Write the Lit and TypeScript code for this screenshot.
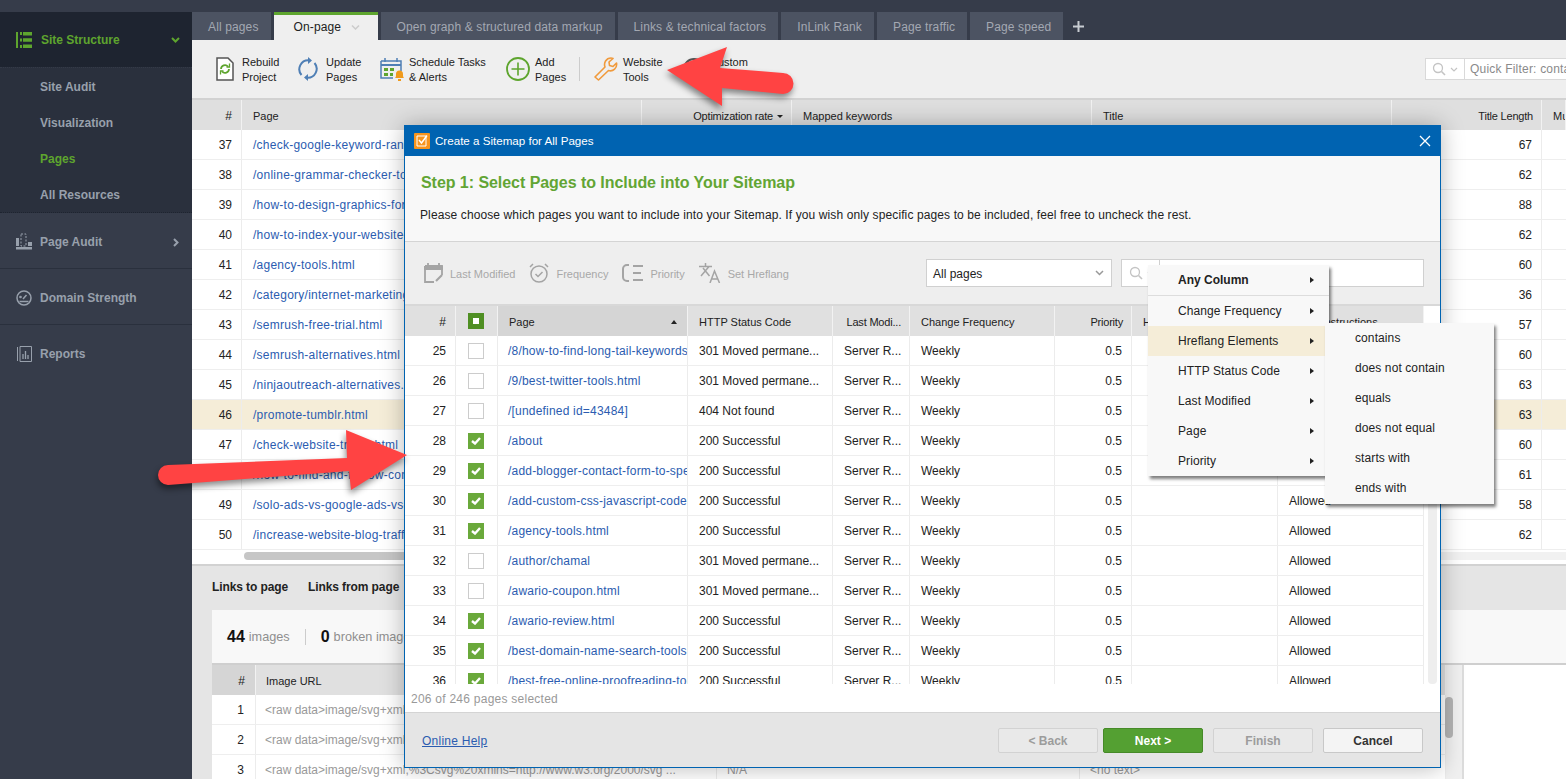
import { LitElement, html, css, svg } from 'lit';
import { customElement } from 'lit/decorators.js';

const mainRows = [
  [37, '/check-google-keyword-rank-checker.html', 67],
  [38, '/online-grammar-checker-tools.html', 62],
  [39, '/how-to-design-graphics-for-social.html', 88],
  [40, '/how-to-index-your-website-fast.html', 62],
  [41, '/agency-tools.html', 60],
  [42, '/category/internet-marketing', 36],
  [43, '/semrush-free-trial.html', 57],
  [44, '/semrush-alternatives.html', 60],
  [45, '/ninjaoutreach-alternatives.html', 63],
  [46, '/promote-tumblr.html', 63],
  [47, '/check-website-traffic.html', 60],
  [48, '/how-to-find-and-fix-low-content.html', 61],
  [49, '/solo-ads-vs-google-ads-vs-facebook.html', 58],
  [50, '/increase-website-blog-traffic.html', 62],
] as const;

const S301 = '301 Moved permane...';
const S200 = '200 Successful';
const dialogRows = [
  [25, false, '/8/how-to-find-long-tail-keywords.html', S301],
  [26, false, '/9/best-twitter-tools.html', S301],
  [27, false, '/[undefined id=43484]', '404 Not found'],
  [28, true, '/about', S200],
  [29, true, '/add-blogger-contact-form-to-spe', S200],
  [30, true, '/add-custom-css-javascript-code', S200],
  [31, true, '/agency-tools.html', S200],
  [32, false, '/author/chamal', S301],
  [33, false, '/awario-coupon.html', S301],
  [34, true, '/awario-review.html', S200],
  [35, true, '/best-domain-name-search-tools', S200],
  [36, true, '/best-free-online-proofreading-tools', S200],
] as const;

const tabs = ['Open graph & structured data markup', 'Links & technical factors', 'InLink Rank', 'Page traffic', 'Page speed'];
const filterItems = ['Change Frequency', 'Hreflang Elements', 'HTTP Status Code', 'Last Modified', 'Page', 'Priority'];
const subItems = ['contains', 'does not contain', 'equals', 'does not equal', 'starts with', 'ends with'];

const searchIcon = html`<svg class="sicon" width="26" height="14" viewBox="0 0 26 14" fill="none" stroke="#c4c4c4">
  <circle cx="6" cy="6" r="4.5" stroke-width="1.3"/><path d="M9.5 9.5l3.5 3.5" stroke-width="1.6"/><path d="M19 6l3 3 3-3" stroke-width="1.2"/>
</svg>`;

@customElement('app-root')
export class AppRoot extends LitElement {
  static styles = css`
    :host { display: block; font: 12px "Liberation Sans", Arial, sans-serif; color: #222; }
    .page { position: relative; display: grid; grid-template-columns: 192px 1fr; width: 1566px; height: 779px; overflow: hidden; background: #363c4a; }
    svg { display: block; flex: none; }

    .side { padding-top: 12px; font-weight: bold; color: #98a0ac; }
    .side-head { display: flex; align-items: center; height: 55px; box-sizing: border-box; padding: 1px 12px 0 16px; gap: 9px; background: #1e2430; color: #5ea52e; }
    .side-head span, .side-item span { flex: 1; }
    .side-sub { display: flex; flex-direction: column; height: 146px; background: #2a303d; border-top: 1px dotted #343a47; border-bottom: 1px dotted #1e2430; box-sizing: border-box; padding-top: 1px; }
    .side-sub div { height: 36px; line-height: 36px; padding-left: 40px; }
    .side-sub .on { color: #5ea52e; }
    .side-item { display: flex; align-items: center; height: 56px; padding: 2px 13px 0 16px; gap: 8px; border-bottom: 1px solid #2a303d; box-sizing: border-box; }
    .side-item:last-child { border: 0; }
    .side-item .more { margin-top: 2px; }

    .main { display: flex; flex-direction: column; min-width: 0; padding-top: 12px; }
    .tabs { display: flex; gap: 3px; height: 28px; flex: none; }
    .tab { padding: 0 12px 0 16px; line-height: 30px; background: #4c5362; color: #a3a8b2; white-space: nowrap; letter-spacing: .13px; }
    .tab.active { display: flex; gap: 10px; align-items: center; box-sizing: border-box; width: 104px; padding: 0 0 0 20px; background: #efefef; color: #222; border-top: 3px solid #5ea52e; line-height: 25px; }
    .tab-add { margin-left: 7px; align-self: center; }

    .toolbar { display: flex; align-items: center; height: 58px; flex: none; background: #efefef; border-bottom: 2px solid #d2d2d2; padding-left: 24px; }
    .tool { display: flex; align-items: center; font-size: 11px; line-height: 15px; color: #222; white-space: nowrap; }
    .tool span { padding-top: 2px; }
    .tool svg { margin-right: 8px; }
    .tool svg.tight { margin-right: 5px; }
    .tool svg.tighter { margin-right: 4px; }
    .tool.w82 { width: 82px; }
    .tool.w88 { width: 88px; }
    .tool.w126 { width: 126px; }
    .tool .narrow { width: 30px; }
    .tool-sep { width: 1px; height: 24px; background: #ccc; margin: 0 14px; }
    .quick { display: flex; align-items: center; height: 22px; margin-left: auto; width: 141px; flex: none; box-sizing: border-box; background: #fff; border: 1px solid #d9d9d9; border-right: 0; color: #8a8a8a; white-space: nowrap; overflow: hidden; letter-spacing: .2px; }
    .quick .sicon { margin: 0 6px 0 6px; }
    .quick b { font-weight: normal; border-left: 1px solid #d9d9d9; line-height: 20px; padding-left: 5px; }

    .row { display: grid; height: 30px; align-items: center; }
    .main-grid { grid-template-columns: 50px 400px 150px 300px 300px 150px 24px; }
    .cell { height: 100%; line-height: 30px; box-sizing: border-box; padding: 0 10px 0 11px; overflow: hidden; white-space: nowrap; border-right: 1px solid #ececec; }
    .num { text-align: right; padding-right: 9px; }
    .link { color: #2b5cb0; }
    .main-table .link { letter-spacing: .25px; }
    .head { background: #dfdfdf; font-size: 11px; color: #222; }
    .head .cell { border-right: 1px solid #f2f2f2; line-height: 33px; }
    .head .num { letter-spacing: -.2px; padding-right: 8px; }
    .head .big { font-size: 12px; letter-spacing: 0; padding-right: 9px; }
    .main-table { flex: none; background: #fff; }
    .main-table .body .row { border-bottom: 1px solid #eee; box-sizing: border-box; }
    .main-table .body .cell:last-child { border: 0; }
    .hl { background: #f5edd8; }
    .caret { display: inline-block; margin-left: 4px; vertical-align: 2px; border: 3px solid transparent; border-top: 3px solid #222; border-bottom: 0; }
    .hscroll { display: flex; flex: none; height: 16px; background: #fff; border-bottom: 2px solid #d2d2d2; box-sizing: border-box; padding: 2px 0 0 52px; }
    .hscroll .thumb { width: 1000px; height: 8px; border-radius: 4px; background: #c6c6c6; }
    .hscroll .track { flex: 1; height: 8px; background: #f1f1f1; }

    .bottom { flex: 1; min-height: 0; background: #e5e5e5; padding-left: 20px; }
    .bottom-tabs { display: flex; gap: 20px; height: 44px; padding-top: 14px; box-sizing: border-box; font-weight: bold; color: #222; letter-spacing: -.1px; }
    .stats { display: flex; align-items: center; height: 55px; box-sizing: border-box; padding-left: 15px; background: #f8f8f8; border-bottom: 2px solid #cfcfcf; color: #8f8f8f; font-size: 12.7px; }
    .stats b { color: #111; font-size: 16px; margin-right: 4px; }
    .stats i { width: 1px; height: 16px; background: #ccc; margin: 0 15px; }
    .b-wrap { display: grid; grid-template-columns: 1234px 16px 2px 1fr; }
    .b-table { background: #fff; }
    .bottom-grid { grid-template-columns: 44px 461px 363px 366px; }
    .b-table .head { background: #e0e0e0; }
    .b-table .head .cell { padding-left: 10px; }
    .b-table .head .cell:first-child { background: #d5d5d5; text-align: right; font-size: 12px; padding: 0 10px 0 0; }
    .b-table .body .cell { color: #999; padding-left: 10px; }
    .b-table .body .cell.url { padding-left: 10px; margin-left: -1px; }
    .b-table .body .cell.n { color: #222; text-align: right; padding: 0 11px 0 0; }
    .b-table .body .row { border-bottom: 1px solid #eee; box-sizing: border-box; }
    .b-scroll { background: #f0f0f0; height: 114px; padding: 32px 0 0; box-sizing: border-box; }
    .b-scroll div { width: 8px; height: 41px; margin-left: -1px; border-radius: 4px; background: #b4b4b4; }
    .b-line { background: #dcdcdc; }
    .b-right { background: #fff; }

    .dialog { position: absolute; left: 404px; top: 125px; width: 1037px; height: 643px; box-sizing: border-box; display: flex; flex-direction: column; background: #fff; border: 1px solid #0063b1; border-top: 0; box-shadow: 0 0 22px rgba(0,0,0,.28); }
    .d-title { display: flex; align-items: center; gap: 5px; height: 31px; flex: none; padding: 0 9px; background: #0063b1; color: #fff; font-size: 11.6px; }
    .d-title span { flex: 1; }
    .d-head { height: 86px; flex: none; background: #f8f8f8; border-bottom: 1px solid #d4d4d4; padding: 17px 15px 0; box-sizing: border-box; }
    .d-head h2 { margin: 0 0 15px 1px; font-size: 16px; line-height: 20px; color: #62a534; letter-spacing: -.05px; }
    .d-head p { margin: 0; line-height: 15px; letter-spacing: .11px; }
    .d-tools { display: flex; align-items: center; height: 64px; flex: none; padding: 0 16px 0 19px; box-sizing: border-box; background: #eee; border-bottom: 2px solid #d8d8d8; color: #a8a8a8; font-size: 11px; }
    .d-tool { display: flex; align-items: center; gap: 7px; margin-right: 14px; padding-top: 2px; white-space: nowrap; }
    .d-tool svg { margin-top: -2px; }
    .select { display: flex; align-items: center; justify-content: space-between; box-sizing: border-box; width: 186px; height: 28px; margin-left: auto; padding: 2px 7px 0 6px; background: #fff; border: 1px solid #d0d0d0; color: #222; font-size: 12px; }
    .select svg { margin-top: -2px; }
    .filter { display: flex; align-items: center; box-sizing: border-box; width: 303px; height: 28px; margin-left: 9px; background: #fff; border: 1px solid #d0d0d0; }
    .filter .sicon { margin: 0 2px 0 7px; }
    .filter i { height: 100%; border-left: 1px solid #d0d0d0; margin-left: 2px; }
    .d-grid { grid-template-columns: 51px 42px 190px 145px 77px 145px 77px 146px 146px; }
    .d-table { position: relative; flex: 1; min-height: 0; overflow: hidden; }
    .d-table .head { background: #e0e0e0; width: 1019px; }
    .d-table .head .s { background: #d5d5d5; }
    .d-table .body .row { width: 1019px; border-bottom: 1px solid #eee; box-sizing: border-box; }
    .d-table .cell.pg { padding: 0 0 0 10px; letter-spacing: .2px; }
    .d-table .cell.c { display: flex; align-items: center; justify-content: center; padding: 0 2px 0 0; }
    .chk { box-sizing: border-box; width: 16px; height: 16px; border: 1px solid #ccc; background: #fff; }
    .chk.on { border: 0; background: #6aa93b; display: flex; align-items: center; justify-content: center; }
    .chk.part { border: 0; background: #4f8f23; display: flex; align-items: center; justify-content: center; }
    .chk.part::after { content: ""; width: 6px; height: 6px; background: #fff; }
    .sort { display: flex; justify-content: space-between; align-items: center; padding-top: 2px; }
    .sort::after { content: ""; border: 3.5px solid transparent; border-bottom: 4px solid #222; border-top: 0; }
    .vscroll { position: absolute; left: 1023px; top: 30px; bottom: 0; width: 9px; background: #eee; border-radius: 4px; }
    .d-status { height: 29px; flex: none; box-sizing: border-box; line-height: 30px; padding-left: 6px; color: #999; border-bottom: 1px solid #d4d4d4; letter-spacing: .25px; }
    .d-foot { height: 54px; flex: none; display: flex; align-items: center; gap: 5px; padding: 0 17px 0 17px; background: #e5e5e5; }
    .help { margin-right: auto; padding-top: 2px; color: #2b5cb0; text-decoration: underline; letter-spacing: .25px; }
    .btn { width: 100px; height: 25px; box-sizing: border-box; line-height: 25px; text-align: center; border: 1px solid #d2d2d2; border-radius: 2px; background: #e9e9e9; color: #9c9c9c; font-weight: bold; }
    .btn.next { background: #54a032; border-color: #468a28; color: #fff; margin-right: 5px; }
    .btn.cancel { background: #f4f4f4; border-color: #c8c8c8; color: #333; margin-left: 5px; }

    .menu { position: absolute; box-sizing: border-box; background: #f8f8f8; box-shadow: 2px 3px 3px rgba(0,0,0,.5); color: #222; letter-spacing: .1px; }
    .menu.first { left: 1148px; top: 265px; width: 181px; height: 211px; }
    .menu.second { left: 1325px; top: 323px; width: 169px; height: 181px; padding-left: 30px; }
    .mi { display: flex; align-items: center; height: 30px; padding-left: 30px; position: relative; white-space: nowrap; }
    .mi::after { content: ""; position: absolute; right: 15px; top: 12px; border: 3px solid transparent; border-left: 4px solid #222; border-right: 0; }
    .mi.any { font-weight: bold; border-bottom: 1px solid #ddd; letter-spacing: 0; }
    .mi.hover { background: #f5edd8; width: 177px; box-sizing: border-box; }
    .mi.hover::after { right: 11px; }
    .menu.second div { height: 30px; line-height: 30px; }

    .arrow { position: absolute; overflow: visible; filter: drop-shadow(-1px 4px 3px rgba(0,0,0,.45)); }
    .arrow.top { left: 666px; top: 46px; }
    .arrow.left { left: 158px; top: 430px; }
  `;

  private sidebar() {
    return html`<aside class="side">
      <div class="side-head">
        <svg width="16" height="16" viewBox="0 0 16 16" fill="#5ea52e"><path d="M0 0h2v16H0zM4 0h2v3H4zM4 6.500h2v3H4zM4 13h2v3H4zM7 0h9v3.500H7zM7 6.200h9v3.500H7zM7 12.500h9V16H7z"/></svg>
        <span>Site Structure</span>
        <svg width="9" height="6" viewBox="0 0 9 6" fill="none" stroke="#5ea52e" stroke-width="2"><path d="M1 1l3.500 3.500L8 1"/></svg>
      </div>
      <div class="side-sub">
        <div>Site Audit</div><div>Visualization</div><div class="on">Pages</div><div>All Resources</div>
      </div>
      <div class="side-item">
        <svg width="16" height="17" viewBox="0 0 16 17" fill="#98a0ac"><path d="M0 14h16v2.500H0zM0 5h3v8H0zM12 9h4v4h-4z"/><path d="M5 1h5v12H5z" fill="none" stroke="#98a0ac" stroke-dasharray="2 1.500"/></svg>
        <span>Page Audit</span>
        <svg class="more" width="6" height="9" viewBox="0 0 6 9" fill="none" stroke="#98a0ac" stroke-width="2"><path d="M1 1l3.500 3.500L1 8"/></svg>
      </div>
      <div class="side-item">
        <svg width="16" height="16" viewBox="0 0 16 16" fill="none" stroke="#98a0ac" stroke-width="1.500"><circle cx="8" cy="8" r="7"/><path d="M3.500 11.500h9M7 9l3.500-4" /><circle cx="4.500" cy="7" r=".6"/></svg>
        <span>Domain Strength</span>
      </div>
      <div class="side-item">
        <svg width="16" height="16" viewBox="0 0 16 16" fill="none" stroke="#98a0ac"><path d="M1.500 1v14M4 .5h11.500v15H4z"/><path d="M7 13V8M9.500 13V5M12 13V9" stroke-width="1.300"/></svg>
        <span>Reports</span>
      </div>
    </aside>`;
  }

  private toolbar() {
    return html`<div class="toolbar">
      <div class="tool w82">
        <svg width="18" height="24" viewBox="0 0 18 24" fill="none"><path d="M1 1h11l5 5v17H1z" fill="#fff" stroke="#555" stroke-width="1.500"/><path d="M5 12a4 4 0 0 1 7-2.500M13 12a4 4 0 0 1-7 2.500" stroke="#5ea52e" stroke-width="1.800"/><path d="M10.500 10h3V6.500M7.500 14h-3v3.500" stroke="#5ea52e" stroke-width="1.300"/></svg>
        <span>Rebuild<br />Project</span>
      </div>
      <div class="tool w82">
        <svg width="20" height="24" viewBox="0 0 20 24" fill="none" stroke="#4f7fb5" stroke-width="2"><path d="M3.500 18A9 9 0 0 1 11 3.200M16.500 6a9 9 0 0 1-7.500 14.800"/><path d="M10 0l4 3.500-4 3.500zM10 17l-4 3.500 4 3.500z" fill="#4f7fb5" stroke="none"/></svg>
        <span>Update<br />Pages</span>
      </div>
      <div class="tool w126">
        <svg class="tight" width="24" height="24" viewBox="0 0 24 24" fill="none"><path d="M1 4h20v10M1 4v17h12" stroke="#4f7fb5" stroke-width="1.500"/><path d="M1 8h20" stroke="#4f7fb5" stroke-width="2"/><path d="M5 1v4M17 1v4" stroke="#4f7fb5" stroke-width="1.500"/><path d="M4 11h4v3H4zM10 11h4v3h-4zM4 16h4v3H4zM10 16h3v3h-3z" fill="#5ea52e"/><path d="M15 21c1-1 1-2 1-4a3.500 3.500 0 0 1 7 0c0 2 0 3 1 4z M18 22h3v2h-3z" fill="#f09a1c"/></svg>
        <span>Schedule Tasks<br />&amp; Alerts</span>
      </div>
      <div class="tool">
        <svg class="tight" width="24" height="24" viewBox="0 0 24 24" fill="none" stroke="#5ea52e" stroke-width="1.800"><circle cx="12" cy="12" r="11"/><path d="M12 5.500v13M5.500 12h13" stroke-width="1.600"/></svg>
        <span class="narrow">Add<br />Pages</span>
      </div>
      <i class="tool-sep"></i>
      <div class="tool w88">
        <svg class="tight" width="24" height="24" viewBox="0 0 24 24" fill="none" stroke="#f09a3c" stroke-width="1.600"><path d="M1 20l10-10c-1.500-4 1-9 6-9 1 0 1.500 .2 2 .5l-4 3.500 .5 3.500 3.500 1 3.500-3.500c1 5-3.500 9-8 7.500L4.500 23z" stroke-linejoin="round"/></svg>
        <span>Website<br />Tools</span>
      </div>
      <div class="tool">
        <svg class="tighter" width="24" height="24" viewBox="0 0 24 24" fill="none" stroke="#555" stroke-width="2"><circle cx="12" cy="12" r="10"/></svg>
        <span>Custom<br />&nbsp;</span>
      </div>
      <div class="quick">${searchIcon}<b>Quick Filter: contains</b></div>
    </div>`;
  }

  private mainTable() {
    return html`<div class="main-table">
      <div class="row main-grid head">
        <div class="cell num big">#</div><div class="cell">Page</div>
        <div class="cell num">Optimization rate<i class="caret"></i></div>
        <div class="cell">Mapped keywords</div><div class="cell">Title</div>
        <div class="cell num">Title Length</div><div class="cell">Mu</div>
      </div>
      <div class="body">
        ${mainRows.map(([n, p, len]) => html`<div class="row main-grid ${n === 46 ? 'hl' : ''}">
          <div class="cell num">${n}</div><div class="cell link">${p}</div>
          <div class="cell"></div><div class="cell"></div><div class="cell"></div>
          <div class="cell num">${len}</div><div class="cell"></div>
        </div>`)}
      </div>
    </div>`;
  }

  private bottomPanel() {
    const url = '<raw data>image/svg+xml,%3Csvg%20xmlns=http://www.w3.org/2000/svg ...';
    return html`<div class="bottom">
      <div class="bottom-tabs"><span>Links to page</span><span>Links from page</span></div>
      <div class="stats"><b>44</b> images<i></i><b>0</b> broken images</div>
      <div class="b-wrap">
        <div class="b-table">
          <div class="row bottom-grid head">
            <div class="cell">#</div><div class="cell">Image URL</div><div class="cell">Alt</div><div class="cell"></div>
          </div>
          <div class="body">
            ${[1, 2, 3].map((n) => html`<div class="row bottom-grid">
              <div class="cell n">${n}</div><div class="cell url">${url}</div><div class="cell">N/A</div><div class="cell">&lt;no text&gt;</div>
            </div>`)}
          </div>
        </div>
        <div class="b-scroll"><div></div></div>
        <div class="b-line"></div>
        <div class="b-right"></div>
      </div>
    </div>`;
  }

  private dialog() {
    return html`<section class="dialog">
      <div class="d-title">
        <svg width="16" height="16" viewBox="0 0 16 16"><rect width="16" height="16" rx="1" fill="#f7941d"/><path d="M3 3h9v10H3z" fill="none" stroke="#fff"/><path d="M5 7l2.500 3L13 2.500" fill="none" stroke="#fff" stroke-width="1.400"/></svg>
        <span>Create a Sitemap for All Pages</span>
        <svg width="12" height="12" viewBox="0 0 12 12" stroke="#fff" stroke-width="1.300"><path d="M1 1l10 10M11 1L1 11"/></svg>
      </div>
      <div class="d-head">
        <h2>Step 1: Select Pages to Include into Your Sitemap</h2>
        <p>Please choose which pages you want to include into your Sitemap. If you wish only specific pages to be included, feel free to uncheck the rest.</p>
      </div>
      <div class="d-tools">
        <div class="d-tool">
          <svg width="19" height="20" viewBox="0 0 19 20" fill="none" stroke="#a4a4a4" stroke-width="1.800"><path d="M1 3h17v9M1 3v16h9"/><path d="M0 3h19v4H0z" fill="#a4a4a4" stroke="none"/><path d="M4 0v3M15 0v3" /><path d="M12 18l6-6" stroke-width="2.200"/></svg>
          Last Modified
        </div>
        <div class="d-tool">
          <svg width="20" height="20" viewBox="0 0 20 20" fill="none" stroke="#a4a4a4" stroke-width="1.500"><circle cx="10" cy="11" r="8"/><path d="M6.500 11l2.500 2.500 4.500-4.500M1 4l3-3M19 4l-3-3"/></svg>
          Frequency
        </div>
        <div class="d-tool">
          <svg width="21" height="20" viewBox="0 0 21 20" fill="none" stroke="#a4a4a4" stroke-width="2"><path d="M7 2H5a4 4 0 0 0-4 4v8a4 4 0 0 0 4 4h2M11 3h10M11 10h8M11 17h10"/></svg>
          Priority
        </div>
        <div class="d-tool">
          <svg width="22" height="20" viewBox="0 0 22 20" fill="none" stroke="#a4a4a4" stroke-width="1.500"><path d="M0 3.500h13M6.500 0v3.500M2 13l8-9.500M4 5l6.500 8M11 20l4.500-12L20.500 20M12.500 16h6.500" /></svg>
          Set Hreflang
        </div>
        <div class="select">All pages
          <svg width="9" height="6" viewBox="0 0 9 6" fill="none" stroke="#999" stroke-width="1.500"><path d="M1 1l3.500 3.500L8 1"/></svg>
        </div>
        <div class="filter">${searchIcon}<i></i></div>
      </div>
      <div class="d-table">
        <div class="row d-grid head">
          <div class="cell num big">#</div>
          <div class="cell c"><div class="chk part"></div></div>
          <div class="cell s sort">Page</div>
          <div class="cell">HTTP Status Code</div><div class="cell num">Last Modi...</div>
          <div class="cell">Change Frequency</div><div class="cell num">Priority</div>
          <div class="cell">Hreflang Elements</div><div class="cell">Robot Instructions</div>
        </div>
        <div class="body">
          ${dialogRows.map(([n, on, p, st]) => html`<div class="row d-grid">
            <div class="cell num">${n}</div>
            <div class="cell c"><div class="chk ${on ? 'on' : ''}">${on ? svg`<svg width="10" height="8" viewBox="0 0 10 8" fill="none" stroke="#fff" stroke-width="2.400"><path d="M1 4l3 2.500L9 1"/></svg>` : ''}</div></div>
            <div class="cell link pg">${p}</div>
            <div class="cell">${st}</div><div class="cell">Server R...</div>
            <div class="cell">Weekly</div><div class="cell num">0.5</div>
            <div class="cell"></div><div class="cell">Allowed</div>
          </div>`)}
        </div>
        <div class="vscroll"></div>
      </div>
      <div class="d-status">206 of 246 pages selected</div>
      <div class="d-foot">
        <span class="help">Online Help</span>
        <div class="btn">&lt; Back</div>
        <div class="btn next">Next &gt;</div>
        <div class="btn">Finish</div>
        <div class="btn cancel">Cancel</div>
      </div>
    </section>`;
  }

  render() {
    return html`<div class="page">
      ${this.sidebar()}
      <div class="main">
        <nav class="tabs">
          <div class="tab">All pages</div>
          <div class="tab active">On-page
            <svg width="9" height="5" viewBox="0 0 9 5" fill="none" stroke="#ccc" stroke-width="1.500"><path d="M1 .5l3.500 3.500L8 .5"/></svg>
          </div>
          ${tabs.map((t) => html`<div class="tab">${t}</div>`)}
          <svg class="tab-add" width="11" height="11" viewBox="0 0 11 11" stroke="#c8ccd2" stroke-width="2"><path d="M5.500 0v11M0 5.500h11"/></svg>
        </nav>
        ${this.toolbar()}
        ${this.mainTable()}
        <div class="hscroll"><div class="thumb"></div><div class="track"></div></div>
        ${this.bottomPanel()}
      </div>
      ${this.dialog()}
      <div class="menu first">
        <div class="mi any">Any Column</div>
        ${filterItems.map((t, i) => html`<div class="mi ${i === 1 ? 'hover' : ''}">${t}</div>`)}
      </div>
      <div class="menu second">${subItems.map((t) => html`<div>${t}</div>`)}</div>
      <svg class="arrow top" width="134" height="62" viewBox="666 46 134 62">
        <path d="M667 70L727 47 720 68 783 73A10.500 10.500 0 0 1 783 94L722 88 722 106z" fill="#ff4343"/>
      </svg>
      <svg class="arrow left" width="250" height="60" viewBox="158 430 250 60">
        <path d="M168 465L347 458 346 430 407 455 351 490 349 471 168 485A10 10 0 0 1 168 465z" fill="#ff4343"/>
      </svg>
    </div>`;
  }
}
